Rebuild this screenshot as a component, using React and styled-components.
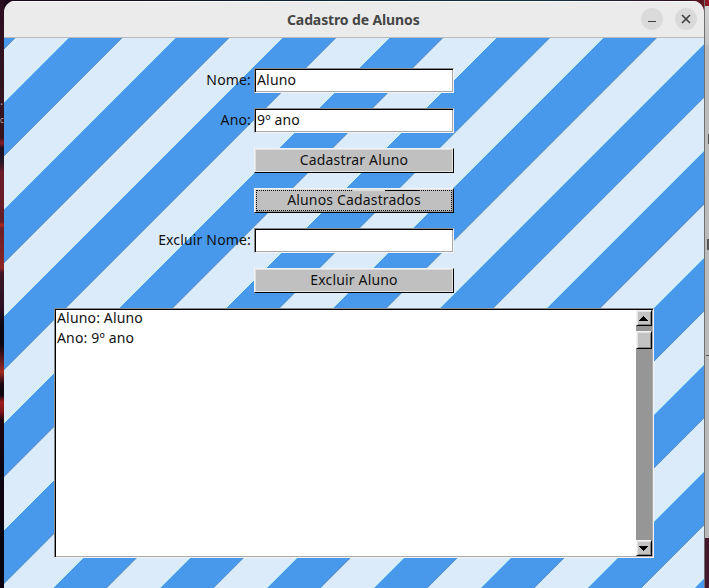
import React from 'react';
import styled, { createGlobalStyle, css } from 'styled-components';

const Global = createGlobalStyle`
  *, *::before, *::after { box-sizing: border-box; }
  html, body { margin: 0; height: 100%; overflow: hidden; }
  body { font: 14px/20px "Noto Sans", sans-serif; letter-spacing: 0.16px; color: #111; }
`;

const Desktop = styled.div`
  display: flex;
  width: 709px;
  height: 588px;
  background: linear-gradient(90deg, #1c0a1a, #15121f 20%, #0c2a3a 50%, #123340 75%, #30101f 97%, #7a1420);
`;

const WallpaperEdge = styled.div`
  width: 4px;
  flex: none;
  overflow: hidden;
  background: linear-gradient(
    180deg, #2b0f20 0, #38141f 138px, #8a1c22 143px, #1c0f20 148px, #241626 162px,
    #6b1a28 172px, #651c26 222px, #b3291c 225px, #6b1f26 228px, #8c2523 268px,
    #3a1526 273px, #2a0f22 308px, #0c0612 325px, #0c0612 345px, #a02a20 372px,
    #1a0812 384px, #0c0612 395px, #a01c20 402px, #7c1418 412px, #1c0610 420px, #0c0410 470px, #090410 588px
  );
`;

const EdgeText = styled.span`
  display: block;
  width: 4px;
  height: 20px;
  margin-top: ${({ $top }) => $top}px;
  color: ${({ $color }) => $color};
  font-size: ${({ $size }) => $size}px;
  letter-spacing: 0;
  white-space: nowrap;
`;

const Window = styled.main`
  display: flex;
  flex-direction: column;
  width: 700px;
  height: 587px;
  flex: none;
  margin-top: 1px;
  overflow: hidden;
  border-radius: 11px 11px 0 0;
`;

const TitleBar = styled.header`
  display: grid;
  grid-template-columns: 1fr auto 1fr;
  align-items: center;
  height: 37px;
  flex: none;
  padding-right: 7px;
  background: #ebebeb;
  border-bottom: 1px solid #b8babc;
  box-shadow: inset 0 1px #fafafa;
`;

const Title = styled.h1`
  grid-column: 2;
  width: 134px;
  margin: 0 -7px 0 0;
  padding-top: 2px;
  font: 700 14px/20px "Noto Sans", sans-serif;
  letter-spacing: -0.12px;
  white-space: nowrap;
  color: #464646;
`;

const WindowControls = styled.div`
  display: flex;
  justify-content: flex-end;
  gap: 12px;
`;

const ControlButton = styled.button`
  display: grid;
  place-items: center;
  width: 22px;
  height: 22px;
  padding: 0;
  border: 0;
  border-radius: 50%;
  background: #dadada;
  svg { display: block; }
`;

const Client = styled.section`
  flex: 1;
  padding: 30px 50px 0;
  background: repeating-linear-gradient(
    135deg,
    #4898eb 0, #4898eb 6.8px, #5891c9 7.5px, #5891c9 7.8px,
    #dcebfa 8.4px, #dcebfa 44.6px, #c9f5fa 45.2px, #c9f5fa 45.5px,
    #4898eb 46.1px, #4898eb 75.6px
  );
`;

const Form = styled.form`
  display: grid;
  grid-template-columns: 197px 200px;
  grid-auto-rows: 25px;
  column-gap: 3px;
  row-gap: 15px;
`;

const Label = styled.label`
  grid-column: 1;
  padding-top: 2px;
  text-align: right;
  white-space: nowrap;
`;

const sunken = css`
  border: 1px solid;
  border-color: #8c8c8c #f4f4f4 #f4f4f4 #8c8c8c;
  box-shadow: inset 1px 1px #000, inset -1px -1px #a9a9a9;
`;

const Field = styled.input`
  ${sunken}
  grid-column: 2;
  width: 200px;
  height: 25px;
  padding: 0 2px 2px;
  border-radius: 0;
  background: #fff;
  color: #111;
  font: inherit;
  letter-spacing: inherit;
  outline: 0;
`;

const PushButton = styled.button`
  display: flex;
  align-items: center;
  justify-content: center;
  position: relative;
  grid-column: 2;
  height: 25px;
  padding: 0 0 1px;
  border: 1px solid;
  border-color: #f3f3f3 #000 #000 #f3f3f3;
  border-radius: 0;
  background: #c0c0c0;
  box-shadow: inset 1px 1px #dedede, inset -1px -1px ${({ $focused }) => ($focused ? '#999' : '#e4e4e4')};
  color: #111;
  font: inherit;
  letter-spacing: inherit;

  ${({ $focused }) => $focused && css`
    &::before {
      content: '';
      position: absolute;
      inset: 1px;
      border: 1px dotted #000;
    }
    &::after {
      content: '';
      position: absolute;
      top: 1px;
      left: 98px;
      width: 67px;
      height: 1px;
      background: linear-gradient(90deg, #dedede 32px, #000 32px);
    }
  `}
`;

const ListPanel = styled.div`
  ${sunken}
  display: flex;
  width: 600px;
  height: 250px;
  margin-top: 15px;
  padding: 1px;
  background: #fff;
`;

const Records = styled.div`
  flex: 1;
  padding: 0 1px;
  margin-top: -2px;
  white-space: pre;
`;

const ScrollBar = styled.div`
  display: flex;
  flex-direction: column;
  width: 16px;
  background: #969696;
`;

const ScrollPart = styled.div`
  display: grid;
  place-items: center;
  height: ${({ $height }) => $height}px;
  margin-top: ${({ $gap }) => $gap || 0};
  padding-right: 1px;
  border: 1px solid;
  border-color: #f3f3f3 #000 #000 #f3f3f3;
  background: #c3c3c3;
  box-shadow: inset 1px 1px #e4e4e4, inset -1px -1px #858585;
  svg { display: block; }
`;

const DesktopEdge = styled.div`
  width: 5px;
  overflow: hidden;
  background: linear-gradient(
    180deg, #8c1721 0, #8c1721 6px, #d2d2d2 6px, #c6c6c6 45px, #bcbcbc 46px, #b9b9b9 538px,
    #421629 538px, #461832 588px
  );
  border-left: 1px solid #707070;
`;

const Sliver = styled.div`
  width: ${({ $width }) => $width}px;
  height: ${({ $height }) => $height}px;
  margin: ${({ $top }) => $top}px 0 0 auto;
  background: #555;
`;

const Arrow = ({ down }) => (
  <svg width="9" height="5" viewBox="0 0 9 5" shapeRendering="crispEdges">
    <path d={down ? 'M0 0h9v1H0zM1 1h7v1H1zM2 2h5v1H2zM3 3h3v1H3zM4 4h1v1H4z' : 'M4 0h1v1H4zM3 1h3v1H3zM2 2h5v1H2zM1 3h7v1H1zM0 4h9v1H0z'} />
  </svg>
);

export default function App() {
  return (
    <>
      <Global />
      <Desktop>
        <WallpaperEdge>
          <EdgeText $top={91} $size={12} $color="#a99fa6">.</EdgeText>
          <EdgeText $top={-1} $size={8} $color="#b9a39e">c</EdgeText>
        </WallpaperEdge>
        <Window>
          <TitleBar>
            <Title>Cadastro de Alunos</Title>
            <WindowControls>
              <ControlButton type="button" aria-label="Minimizar">
                <svg width="22" height="22"><path d="M7 13.5h8" stroke="#3d3d3d" /></svg>
              </ControlButton>
              <ControlButton type="button" aria-label="Fechar">
                <svg width="22" height="22"><path d="m7 7 8 8M15 7l-8 8" stroke="#3d3d3d" strokeWidth="1.6" /></svg>
              </ControlButton>
            </WindowControls>
          </TitleBar>
          <Client>
            <Form>
              <Label htmlFor="nome">Nome:</Label>
              <Field id="nome" defaultValue="Aluno" />
              <Label htmlFor="ano">Ano:</Label>
              <Field id="ano" defaultValue="9º ano" />
              <PushButton type="button">Cadastrar Aluno</PushButton>
              <PushButton type="button" $focused>Alunos Cadastrados</PushButton>
              <Label htmlFor="excluir">Excluir Nome:</Label>
              <Field id="excluir" />
              <PushButton type="button">Excluir Aluno</PushButton>
            </Form>
            <ListPanel>
              <Records>{'Aluno: Aluno\nAno: 9º ano'}</Records>
              <ScrollBar>
                <ScrollPart $height={16}><Arrow /></ScrollPart>
                <ScrollPart $height={18} $gap="5px" />
                <ScrollPart $height={16} $gap="auto"><Arrow down /></ScrollPart>
              </ScrollBar>
            </ListPanel>
          </Client>
        </Window>
        <DesktopEdge>
          <Sliver $width={1} $height={10} $top={134} />
          <Sliver $width={2} $height={11} $top={95} />
          <Sliver $width={3} $height={1} $top={105} />
        </DesktopEdge>
      </Desktop>
    </>
  );
}
